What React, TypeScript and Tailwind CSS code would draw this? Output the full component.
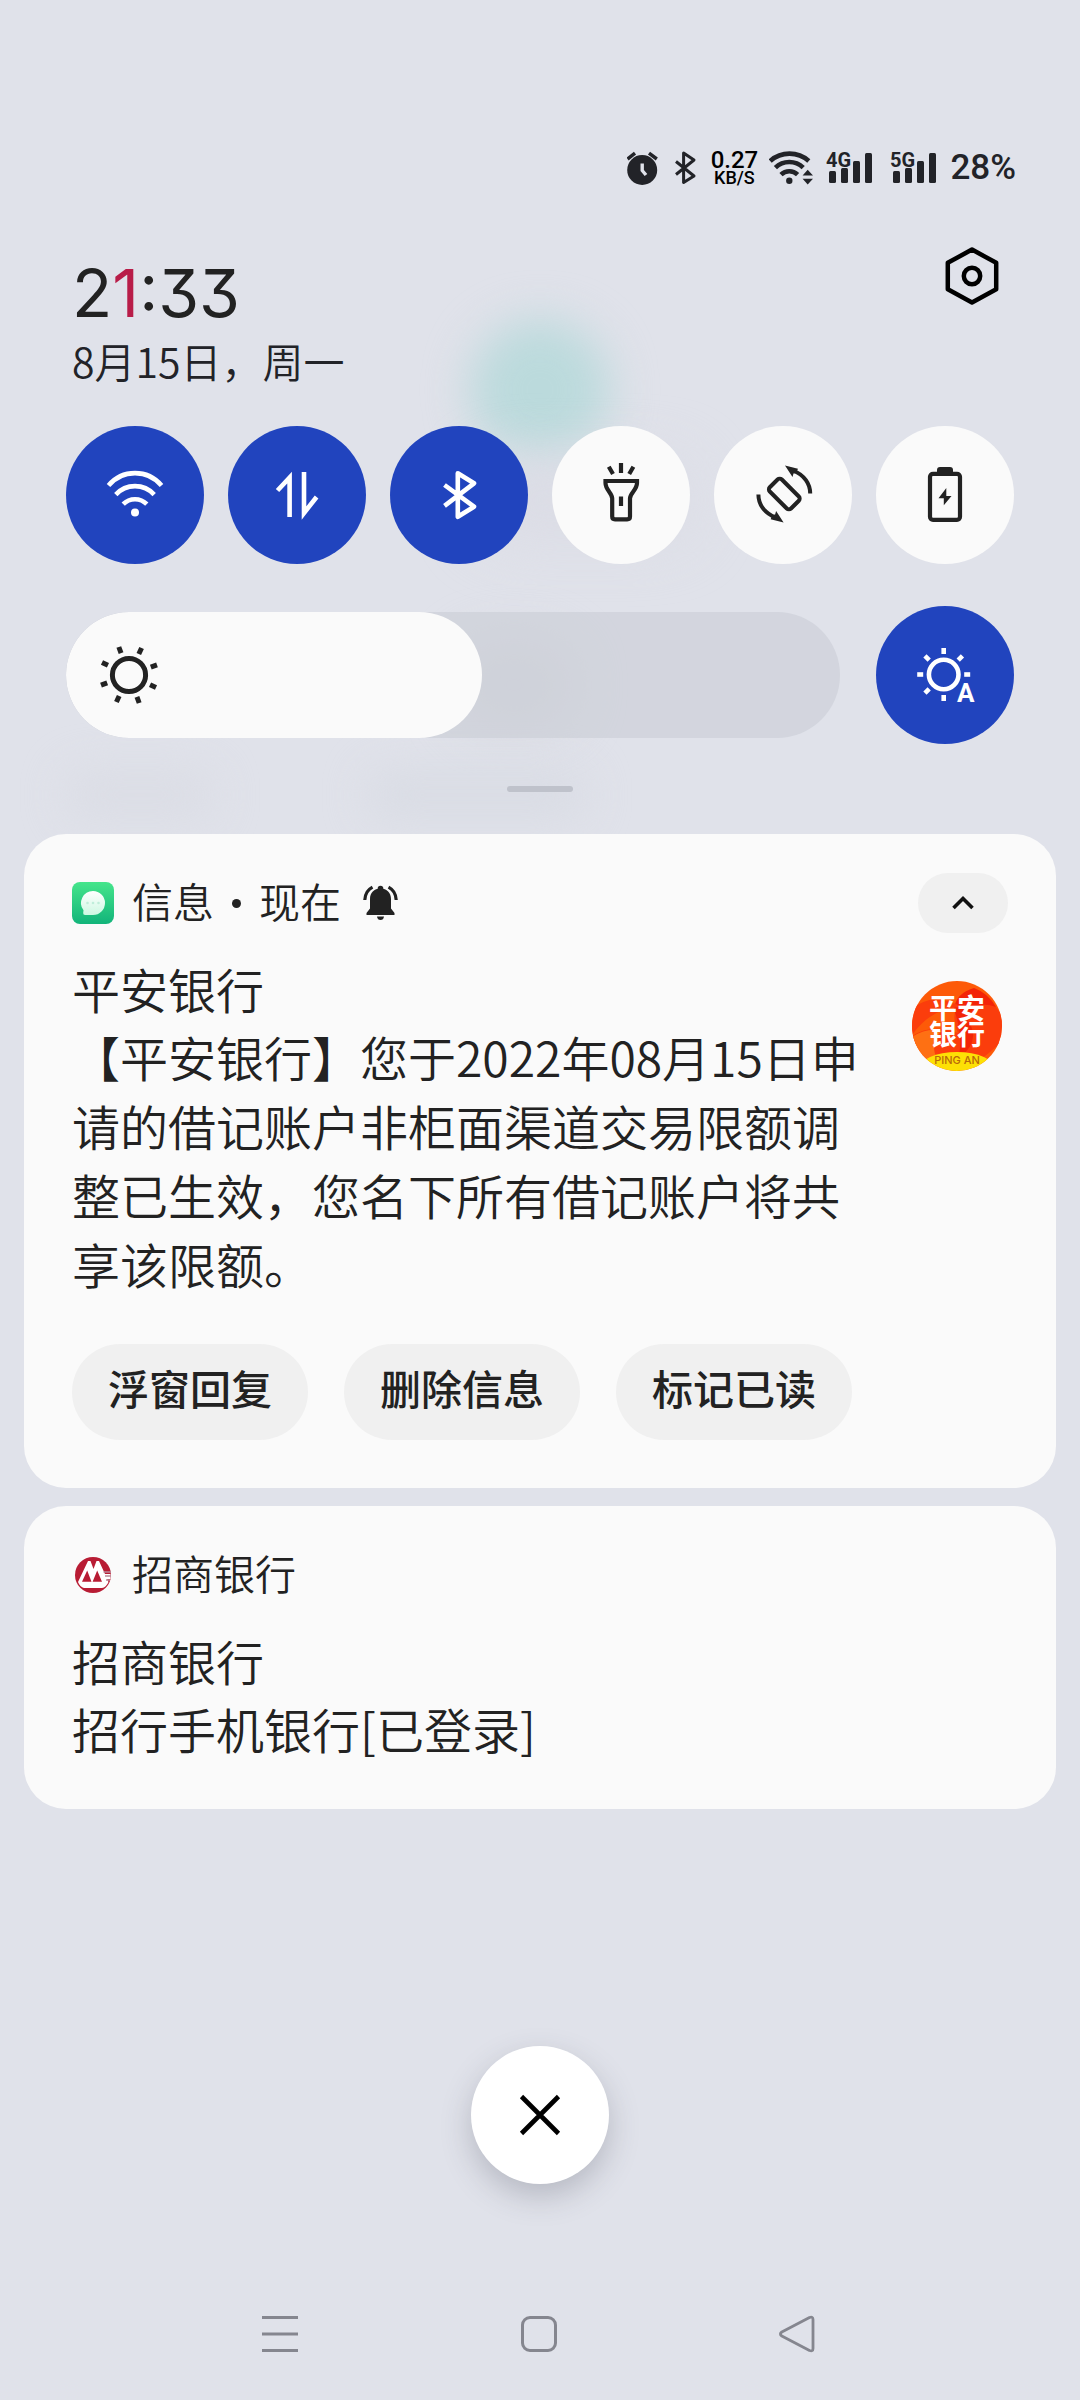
import React, { useState } from 'react';

const AlarmIcon = () => (
  <svg width="32" height="36" viewBox="0 0 32 36" fill="none" stroke="#222328" strokeWidth="3.5">
    <circle cx="15.2" cy="20" r="15" fill="#222328" stroke="none" />
    <path d="M0.5 9 8 3.2M22 3.2 29.8 9" />
    <path d="M15.2 13.5V20.5L19 25" stroke="#e0e2ea" strokeWidth="3.4" />
  </svg>
);

const SmallBluetoothIcon = () => (
  <svg width="22" height="36" viewBox="0 0 22 36" fill="none" stroke="#222328" strokeWidth="3" strokeLinejoin="round">
    <path d="M1 11.5 19 26 8.6 32.5V3L19 10 1 24.5" />
  </svg>
);

const SmallWifiIcon = () => (
  <svg width="45" height="36" viewBox="0 0 45 36" fill="none" stroke="#222328" strokeWidth="4.6">
    <path d="M1.2 11A29 29 0 0 1 39.8 11" />
    <path d="M6.4 17.6A20 20 0 0 1 34.2 17.6" />
    <path d="M12 24.6A12 12 0 0 1 28.6 24.6" />
    <circle cx="20.3" cy="30.8" r="3.2" fill="#222328" stroke="none" />
    <path d="M38.7 19.8 44 25.4H33.6ZM38.7 34.4 44 28.8H33.6Z" fill="#222328" stroke="none" />
  </svg>
);

const SignalIcon = ({ label }: { label: string }) => (
  <svg width="48" height="42" viewBox="0 -3 48 42" fill="#222328">
    <text x="0" y="17" fontFamily="Roboto, 'Liberation Sans', sans-serif" fontSize="20" fontWeight="700">{label}</text>
    <rect x="3" y="21" width="7" height="12" rx="1.5" />
    <rect x="15" y="18" width="7" height="15" rx="1.5" />
    <rect x="27" y="11" width="7" height="22" rx="1.5" />
    <rect x="39" y="3" width="7" height="30" rx="1.5" />
  </svg>
);

const SettingsIcon = () => (
  <svg width="60" height="60" viewBox="0 0 60 60" fill="none" stroke="#000" strokeWidth="4.5" strokeLinejoin="round">
    <path d="M30 3.6 54.2 16.8V43.2L30 56.4 5.8 43.2V16.8Z" />
    <circle cx="30" cy="30" r="8.2" />
  </svg>
);

const WifiIcon = () => (
  <svg width="60" height="60" viewBox="0 0 60 60" fill="none" stroke="#fff" strokeWidth="4.6">
    <path d="M3.5 20.5A34.5 34.5 0 0 1 56.5 20.5" />
    <path d="M10.8 29.6A26 26 0 0 1 49.2 29.6" />
    <path d="M18.2 39.2A16.5 16.5 0 0 1 41.8 39.2" />
    <circle cx="30" cy="47.6" r="4" fill="#fff" stroke="none" />
  </svg>
);

const DataIcon = () => (
  <svg width="60" height="60" viewBox="0 0 60 60" fill="none" stroke="#fff" strokeWidth="4.6">
    <path d="M10.5 25.5 22.6 12.6V52" />
    <path d="M37 7V48L49.6 32" />
  </svg>
);

const BluetoothIcon = () => (
  <svg width="60" height="60" viewBox="0 0 60 60" fill="none" stroke="#fff" strokeWidth="4.6" strokeLinejoin="round">
    <path d="M15.5 20 45 41.7 28.8 51.8V8.2L45 18.3 15.5 40.8" />
  </svg>
);

const TorchIcon = () => (
  <svg width="72" height="72" viewBox="0 0 72 72" fill="none" stroke="#222" strokeWidth="4.2">
    <path d="M36 4V14M23.8 7.8 28 15M48.4 7.8 44.2 15M36 37.5V47" />
    <path d="M20.5 22H52V24C52 31 45 34 45 39.5V57.5Q45 60.3 42.2 60.3H30Q27.2 60.3 27.2 57.5V39.5C27.2 34 20.5 31 20.5 24Z" />
  </svg>
);

const RotateIcon = () => (
  <svg width="72" height="72" viewBox="0 0 72 72" fill="none" stroke="#222" strokeWidth="4">
    <rect x="22.3" y="26.5" width="30" height="17" rx="3" transform="rotate(45 37.3 35)" />
    <path d="M63.2 34.5C63.2 25 57.5 16 46 11.5" />
    <path d="M38 6.5 51 9.8 49 14 46.5 14.5 45.5 18Z" fill="#222" stroke="none" />
    <path d="M11.4 35.5C11.4 45 17 54 28.6 58.5" />
    <path d="M36.6 63.5 23.6 60.2 25.6 56 28.1 55.5 29.1 52Z" fill="#222" stroke="none" />
  </svg>
);

const BatteryIcon = () => (
  <svg width="72" height="72" viewBox="0 0 72 72" fill="#222">
    <rect x="21" y="14.8" width="30" height="46" rx="3" fill="none" stroke="#222" strokeWidth="4.2" />
    <path d="M28 13V11Q28 8 31 8H41Q44 8 44 11V13Z" />
    <path d="M37.3 29 29.5 39.3H34.8V46.3L42.5 37H37.3Z" />
  </svg>
);

const SUN_RAYS = [0, 45, 90, 135, 180, 225, 270, 315];

const SunIcon = () => (
  <svg width="66" height="66" viewBox="0 0 66 66" fill="none" stroke="#222" strokeWidth="5">
    <circle cx="33" cy="33" r="16.6" />
    {SUN_RAYS.map((a) => (
      <path key={a} d="M33 3.2V9.8" transform={`rotate(${a + 25} 33 33)`} />
    ))}
  </svg>
);

const AutoBrightnessIcon = () => (
  <svg width="72" height="72" viewBox="0 0 72 72" fill="none" stroke="#fff" strokeWidth="4.6">
    <circle cx="34.7" cy="35.5" r="14.8" />
    {SUN_RAYS.filter((a) => a !== 135).map((a) => (
      <path key={a} d="M34.7 9V15" transform={`rotate(${a} 34.7 35.5)`} />
    ))}
    <text x="48" y="63" fontFamily="Roboto, 'Liberation Sans', sans-serif" fontSize="26" fontWeight="700" fill="#fff" stroke="none">A</text>
  </svg>
);

const MessagesLogo = () => (
  <svg width="42" height="42" viewBox="0 0 42 42">
    <defs>
      <linearGradient id="msg-bg" x1="0" y1="0" x2="0" y2="1">
        <stop offset="0" stopColor="#45e58b" />
        <stop offset="1" stopColor="#12b47a" />
      </linearGradient>
      <linearGradient id="msg-bubble" x1="0" y1="0" x2="0" y2="1">
        <stop offset="0" stopColor="#ffffff" />
        <stop offset="1" stopColor="#cdf8e2" />
      </linearGradient>
    </defs>
    <rect width="42" height="42" rx="8" fill="url(#msg-bg)" />
    <path d="M21 9A12 12 0 1 1 21 33H13Q11 33 11.2 31L11.5 28.3A12 12 0 0 1 21 9Z" fill="url(#msg-bubble)" />
    <g fill="#bfeeda">
      <circle cx="15.5" cy="21" r="1.3" />
      <circle cx="21" cy="21" r="1.3" />
      <circle cx="26.5" cy="21" r="1.3" />
    </g>
  </svg>
);

const BellIcon = () => (
  <svg width="36" height="36" viewBox="0 0 36 36" fill="#222">
    <circle cx="17.5" cy="3.5" r="2.8" />
    <path d="M17.5 3.5C24 3.5 28 8 28 14V23.5L31.5 28V30H3.5V28L7 23.5V14C7 8 11 3.5 17.5 3.5Z" />
    <path d="M14 31.5H21Q20.5 35 17.5 35T14 31.5Z" />
    <path d="M9.5 2.2Q2.2 6 1.8 15M25.5 2.2Q32.8 6 33.2 15" fill="none" stroke="#222" strokeWidth="3.2" />
  </svg>
);

const PinganLogo = () => (
  <svg className="shrink-0" width="90" height="90" viewBox="0 0 90 90" role="img" aria-label="平安银行">
    <defs>
      <clipPath id="pa-clip"><circle cx="45" cy="45" r="45" /></clipPath>
    </defs>
    <g clipPath="url(#pa-clip)">
      <rect width="90" height="90" fill="#fd5a08" />
      <path d="M0 55Q20 42 46 52Q34 24 62 8Q76 14 90 34V60Q66 84 45 90Q10 84 0 55Z" fill="#fb3d0c" />
      <path d="M42 28Q44 12 62 7Q76 12 84 26Q60 18 56 40Q70 60 46 78Q52 58 42 28Z" fill="#f32408" />
      <path d="M0 28Q20 10 50 26Q20 26 0 54Z" fill="#fb3d0c" />
      <path d="M0 56Q16 46 30 50Q18 60 24 76L10 80Z" fill="#fe7013" />
      <ellipse cx="45" cy="88" rx="38" ry="17" fill="#fde005" />
    </g>
    <g fontFamily="'Noto Sans CJK SC', sans-serif" fontWeight="700" fontSize="28" fill="#fff" textAnchor="middle">
      <text x="45" y="38">平安</text>
      <text x="45" y="64">银行</text>
    </g>
    <text x="45" y="83" fontFamily="Inter, sans-serif" fontWeight="500" fontSize="11" fill="#b8690a" textAnchor="middle">PING AN</text>
  </svg>
);

const CmbLogo = () => (
  <svg width="42" height="42" viewBox="-3 -3 42 42">
    <circle cx="18" cy="18" r="18" fill="#b81c34" />
    <path d="M13 4H15.5L18.5 12 21.5 4H24L30 17H35.5V22H32L33.5 25Q31 30.5 27 31H9Q5 30 3 25Z" fill="#fff" />
    <path d="M12.2 13.5 16.5 24.8H7ZM22.2 13.5 27 24.8H17.6Z" fill="#b81c34" />
    <path d="M28.5 15H36M30 19H36M31 23H35" stroke="#b98a9a" strokeWidth="1.6" />
  </svg>
);

interface Tile {
  name: string;
  on: boolean;
  icon: React.ReactNode;
}

const TILES: Tile[] = [
  { name: 'WLAN', on: true, icon: <WifiIcon /> },
  { name: '移动数据', on: true, icon: <DataIcon /> },
  { name: '蓝牙', on: true, icon: <BluetoothIcon /> },
  { name: '手电筒', on: false, icon: <TorchIcon /> },
  { name: '自动旋转', on: false, icon: <RotateIcon /> },
  { name: '省电模式', on: false, icon: <BatteryIcon /> },
];

const ACTIONS = ['浮窗回复', '删除信息', '标记已读'];

const MAX_BRIGHTNESS = 255;

const StatusBar = () => (
  <div className="flex h-9 items-center justify-end pr-[64px]">
    <div className="flex items-center">
      <AlarmIcon />
      <span className="ml-4"><SmallBluetoothIcon /></span>
      <div className="ml-3 flex w-[50px] flex-col items-center font-[Roboto,sans-serif] font-medium text-black">
        <span className="text-[24px] leading-[20px]">0.27</span>
        <span className="text-[18px] leading-[16px]">KB/S</span>
      </div>
      <span className="ml-2.5"><SmallWifiIcon /></span>
      <span className="ml-3"><SignalIcon label="4G" /></span>
      <span className="ml-4"><SignalIcon label="5G" /></span>
    </div>
    <span className="ml-3 font-[Roboto,sans-serif] text-[35px] leading-9 font-medium text-[#222328]">28%</span>
  </div>
);

const App: React.FC = () => {
  const [brightness, setBrightness] = useState(137);

  return (
    <div className="relative flex min-h-screen flex-col overflow-hidden bg-[#e0e2ea] pt-[150px] font-['Noto_Sans_CJK_SC',sans-serif] text-[#222222]">
      {/* Blurred wallpaper showing through the shade */}
      <div className="pointer-events-none absolute inset-x-0 top-0 h-[840px]">
        <div className="absolute top-[320px] left-1/2 size-[140px] -translate-x-1/2 rounded-full bg-[#bbdadc] blur-[22px]" />
        <div className="absolute top-[460px] left-[44%] h-[80px] w-[220px] rounded-full bg-[#dbdce5] blur-[28px]" />
        <div className="absolute top-[640px] left-[42%] h-[90px] w-[120px] rounded-full bg-[#d6d8df] blur-[24px]" />
        <div className="absolute top-[770px] left-[34%] h-[50px] w-[220px] rounded-full bg-[#d9dce4] blur-[20px]" />
        <div className="absolute top-[770px] left-[6%] h-[50px] w-[150px] rounded-full bg-[#dbdde5] blur-[20px]" />
      </div>

      <div className="relative flex grow flex-col">
        <StatusBar />

        {/* Clock and date */}
        <header className="mt-[60px] flex items-start justify-between pr-[78px] pl-[72px]">
          <div>
            <div className="font-[Inter,sans-serif] text-[66px] leading-[94px] font-normal [font-feature-settings:'cv09'_1]">
              2<span className="text-[#b81c48]">1</span>:33
            </div>
            <div className="text-[41px] leading-[40px] font-[350] text-[#222328]">8月15日，周一</div>
          </div>
          <button aria-label="设置"><SettingsIcon /></button>
        </header>

        {/* Quick settings */}
        <div className="mt-[46px] flex justify-between px-[66px]">
          {TILES.map((tile) => (
            <button
              key={tile.name}
              aria-label={tile.name}
              aria-pressed={tile.on}
              className={`flex size-[138px] items-center justify-center rounded-full ${
                tile.on ? 'bg-[#2144be]' : 'bg-[#fafafa]'
              }`}
            >
              {tile.icon}
            </button>
          ))}
        </div>

        {/* Brightness */}
        <div className="mt-[42px] flex items-center gap-9 px-[66px]">
          <label className="relative block h-[126px] grow overflow-hidden rounded-full bg-[#c9cdd5]/60">
            <div
              className="flex h-full items-center rounded-full bg-[#fafafa] pl-[30px]"
              style={{ width: `${(brightness / MAX_BRIGHTNESS) * 100}%` }}
            >
              <SunIcon />
            </div>
            <input
              type="range"
              aria-label="亮度"
              min={42}
              max={MAX_BRIGHTNESS}
              value={brightness}
              onChange={(e) => setBrightness(Number(e.target.value))}
              className="absolute inset-0 h-full w-full opacity-0"
            />
          </label>
          <button aria-label="自动亮度" aria-pressed className="flex size-[138px] shrink-0 items-center justify-center rounded-full bg-[#2144be]">
            <AutoBrightnessIcon />
          </button>
        </div>

        <div className="mx-auto mt-[42px] h-1.5 w-[66px] rounded-sm bg-[#bfc2cb]" />

        {/* Notifications */}
        <main className="mt-[42px] flex flex-col gap-[18px] px-6">
          <article className="rounded-[42px] bg-[#fafafa] px-12 pt-[39px] pb-12">
            <div className="flex h-[60px] items-center text-[41px] leading-[54px] font-[350]">
              <MessagesLogo />
              <span className="ml-[18px] pb-1.5">信息</span>
              <span className="mx-[18px] size-[9px] rounded-full bg-[#222222]" />
              <span className="pb-1.5">现在</span>
              <span className="ml-[22px]"><BellIcon /></span>
              <button aria-label="收起" className="ml-auto flex h-[60px] w-[90px] items-center justify-center rounded-full bg-[#f0f0f0]">
                <svg width="24" height="24" viewBox="0 0 24 24" fill="none" stroke="#111" strokeWidth="3.6">
                  <path d="M2.5 17 12 7.5 21.5 17" />
                </svg>
              </button>
            </div>
            <div className="mt-[21px] flex items-start justify-between text-[48px] font-[350]">
              <div className="w-[800px]">
                <h2 className="leading-[68px]">平安银行</h2>
                <p className="leading-[69px]">
                  【平安银行】您于2022年08月15日申请的借记账户非柜面渠道交易限额调整已生效，您名下所有借记账户将共享该限额。
                </p>
              </div>
              <div className="mt-[27px] mr-1.5"><PinganLogo /></div>
            </div>
            <div className="mt-[46px] flex gap-9">
              {ACTIONS.map((action) => (
                <button key={action} className="h-24 w-[236px] rounded-full bg-[#f0f0f0] pb-2 text-[41px] font-medium">
                  {action}
                </button>
              ))}
            </div>
          </article>

          <article className="rounded-[42px] bg-[#fafafa] px-12 pt-[39px] pb-[46px]">
            <div className="flex h-[60px] items-center text-[41px] leading-[54px] font-[350]">
              <CmbLogo />
              <span className="ml-[18px] pb-1.5">招商银行</span>
            </div>
            <div className="mt-[21px] text-[48px] font-[350]">
              <h2 className="leading-[68px]">招商银行</h2>
              <p className="leading-[69px]">招行手机银行[已登录]</p>
            </div>
          </article>
        </main>

        <button
          aria-label="清除全部"
          className="mx-auto mt-auto flex size-[138px] items-center justify-center rounded-full bg-white shadow-[0_12px_30px_rgba(60,65,80,0.25)]"
        >
          <svg width="42" height="42" viewBox="0 0 42 42" fill="none" stroke="#000" strokeWidth="4.6">
            <path d="M2.5 2.5 39.5 39.5M39.5 2.5 2.5 39.5" />
          </svg>
        </button>

        {/* Navigation bar */}
        <nav className="mt-[130px] flex justify-between pr-[262px] pl-[260px] pb-[46px]">
          <button aria-label="最近任务">
            <svg width="40" height="40" viewBox="0 0 40 40" stroke="#85868f" strokeWidth="3">
              <path d="M2 3.5H38M2 20H38M2 36.5H38" />
            </svg>
          </button>
          <button aria-label="主屏幕">
            <svg width="40" height="40" viewBox="0 0 40 40" fill="none" stroke="#85868f" strokeWidth="3">
              <rect x="3.5" y="3.5" width="33" height="33" rx="7.5" />
            </svg>
          </button>
          <button aria-label="返回">
            <svg width="40" height="40" viewBox="0 0 40 40" fill="none" stroke="#85868f" strokeWidth="2.8" strokeLinejoin="round">
              <path d="M3.8 18 31.5 3.5Q35 2.2 35 5.5V34.5Q35 37.8 31.5 36.5L3.8 22Q1 20 3.8 18Z" />
            </svg>
          </button>
        </nav>
      </div>
    </div>
  );
};

export default App;
